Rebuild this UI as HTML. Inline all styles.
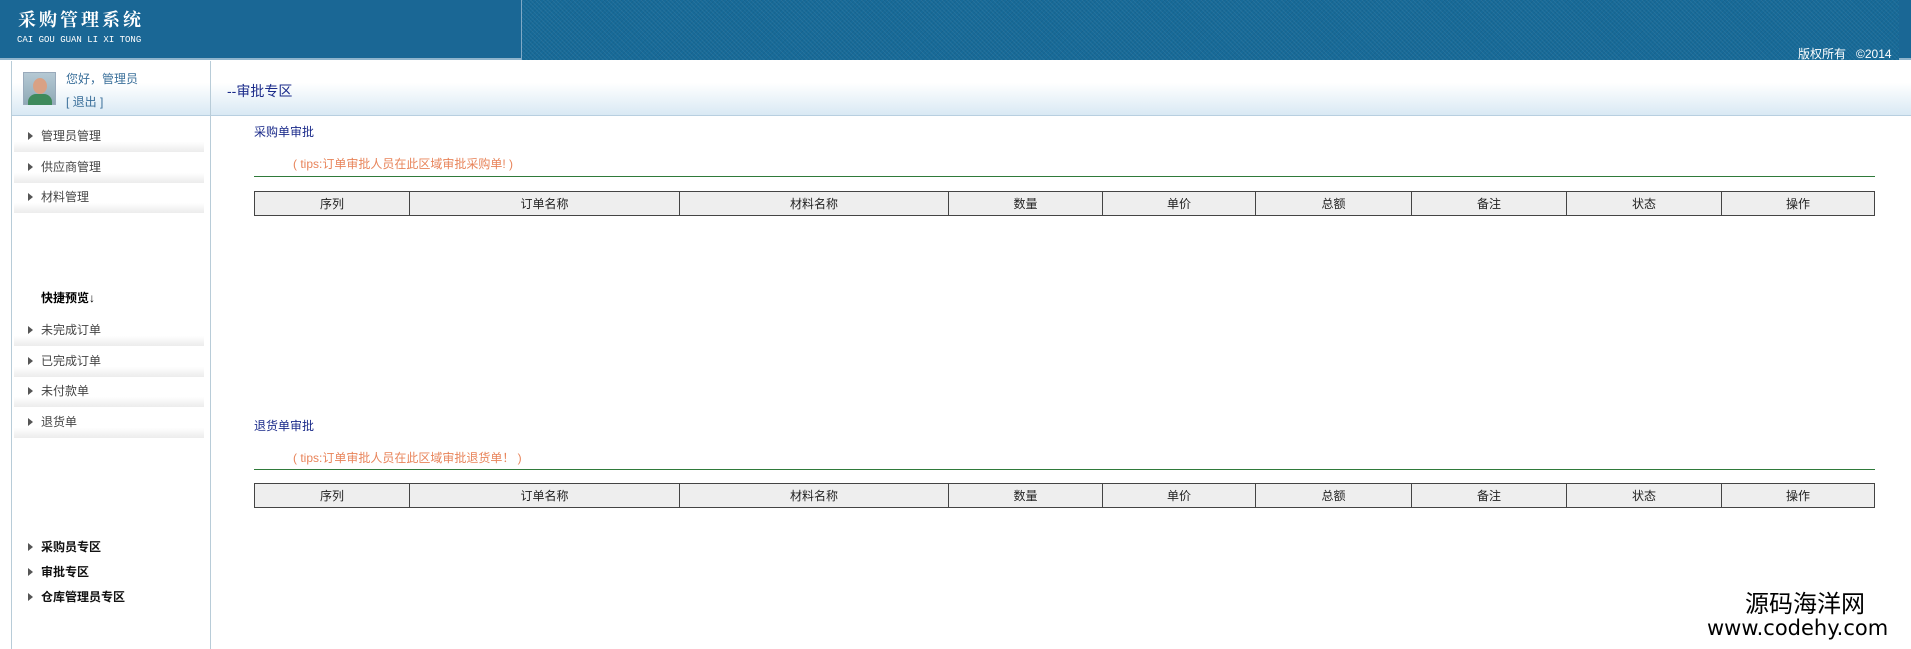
<!DOCTYPE html>
<html><head><meta charset="utf-8"><style>
*{margin:0;padding:0;box-sizing:border-box}
body{width:1911px;height:649px;overflow:hidden;background:#fff;font-family:"Liberation Sans","Noto Sans CJK SC",sans-serif;font-size:12px;position:relative}
.a{position:absolute;white-space:nowrap}
.hd{position:absolute;left:0;top:0;width:1911px;height:60px;background:#1a6795}
.hd2{position:absolute;left:521px;top:0;width:1378px;height:60px;background:#176a98;border-left:1px solid #7fa9c6;background-image:repeating-linear-gradient(45deg,rgba(255,255,255,.06) 0 1px,transparent 1px 3px),repeating-linear-gradient(-45deg,rgba(0,0,0,.06) 0 1px,transparent 1px 3px)}
.hd::after{content:"";position:absolute;left:0;right:0;bottom:0;height:2px;background:#8fb4cc}
.bar{position:absolute;top:61px;height:55px;background:linear-gradient(#fff 0%,#fff 40%,#d9e9f4 100%);border-bottom:1px solid #b8cfe0}
.mi{position:absolute;left:14px;width:190px;height:26px;background:linear-gradient(#fff 60%,#ececec 100%);font-size:12px;color:#444;padding-left:27px;line-height:20px}
.mi::before{content:"";position:absolute;left:14px;top:6px;border-left:5px solid #555;border-top:4px solid transparent;border-bottom:4px solid transparent}
.bi{position:absolute;left:14px;font-size:12px;font-weight:bold;color:#111;padding-left:27px;line-height:16px}
.bi::before{content:"";position:absolute;left:14px;top:4px;border-left:5px solid #555;border-top:4px solid transparent;border-bottom:4px solid transparent}
table{position:absolute;left:254px;width:1621px;border-collapse:collapse;height:25px}
td{border:1px solid #444;background:#eee;text-align:center;font-size:12px;color:#222}
</style></head><body>
<div class="hd"></div><div class="hd2"></div>
<div class="a" style="left:18px;top:6px;color:#fff;font-size:18px;font-weight:bold;font-family:'Noto Serif CJK SC',serif;letter-spacing:3px">采购管理系统</div>
<div class="a" style="left:17px;top:35px;color:#fff;font-size:9px;font-family:'Liberation Mono',monospace">CAI GOU GUAN LI XI TONG</div>
<div class="a" style="left:1798px;top:45px;color:#fff;font-size:12px">版权所有&nbsp;&nbsp;&nbsp;©2014</div>

<div style="position:absolute;left:11px;top:61px;width:1px;height:588px;background:#b8ccd8"></div>
<div style="position:absolute;left:210px;top:61px;width:1px;height:588px;background:#b8ccd8"></div>
<div class="bar" style="left:12px;width:198px"></div>
<div class="bar" style="left:211px;width:1700px"></div>
<div style="position:absolute;left:23px;top:72px;width:33px;height:33px;border:1px solid #9ab;background:linear-gradient(#b5c9d4,#8fa9b6)"><div style="position:absolute;left:9px;top:5px;width:14px;height:16px;border-radius:50%;background:#d9a184"></div><div style="position:absolute;left:4px;top:21px;width:24px;height:11px;border-radius:8px 8px 0 0;background:#3f8a5c"></div></div>
<div class="a" style="left:66px;top:70px;color:#3a6f9a;font-size:12px">您好，管理员</div>
<div class="a" style="left:66px;top:93px;color:#3a6f9a;font-size:12px">[ 退出 ]</div>
<div class="a" style="left:227px;top:81px;color:#1a2a8a;font-size:14px">--审批专区</div>

<div class="mi" style="top:126px">管理员管理</div>
<div class="mi" style="top:157px">供应商管理</div>
<div class="mi" style="top:187px">材料管理</div>
<div class="a" style="left:41px;top:289px;font-size:12px;font-weight:bold">快捷预览↓</div>
<div class="mi" style="top:320px">未完成订单</div>
<div class="mi" style="top:351px">已完成订单</div>
<div class="mi" style="top:381px">未付款单</div>
<div class="mi" style="top:412px">退货单</div>
<div class="bi" style="top:539px">采购员专区</div>
<div class="bi" style="top:564px">审批专区</div>
<div class="bi" style="top:589px">仓库管理员专区</div>

<div class="a" style="left:254px;top:123px;color:#1a2a8a">采购单审批</div>
<div class="a" style="left:293px;top:155px;color:#e8845a;font-size:12px">( tips:订单审批人员在此区域审批采购单! )</div>
<div style="position:absolute;left:254px;top:176px;width:1621px;height:1px;background:#2f7a3a"></div>
<table style="top:191px"><tr><td style="width:155px">序列</td><td style="width:270px">订单名称</td><td style="width:269px">材料名称</td><td style="width:154px">数量</td><td style="width:153px">单价</td><td style="width:156px">总额</td><td style="width:155px">备注</td><td style="width:155px">状态</td><td>操作</td></tr></table>

<div class="a" style="left:254px;top:417px;color:#1a2a8a">退货单审批</div>
<div class="a" style="left:293px;top:449px;color:#e8845a;font-size:12px">( tips:订单审批人员在此区域审批退货单！ )</div>
<div style="position:absolute;left:254px;top:469px;width:1621px;height:1px;background:#2f7a3a"></div>
<table style="top:483px"><tr><td style="width:155px">序列</td><td style="width:270px">订单名称</td><td style="width:269px">材料名称</td><td style="width:154px">数量</td><td style="width:153px">单价</td><td style="width:156px">总额</td><td style="width:155px">备注</td><td style="width:155px">状态</td><td>操作</td></tr></table>

<div class="a" style="left:1745px;top:591px;font-size:24px;color:#000;line-height:28px">源码海洋网</div>
<div class="a" style="left:1707px;top:614px;font-size:21px;color:#000;line-height:28px;font-family:'DejaVu Sans',sans-serif">www.codehy.com</div>
</body></html>
